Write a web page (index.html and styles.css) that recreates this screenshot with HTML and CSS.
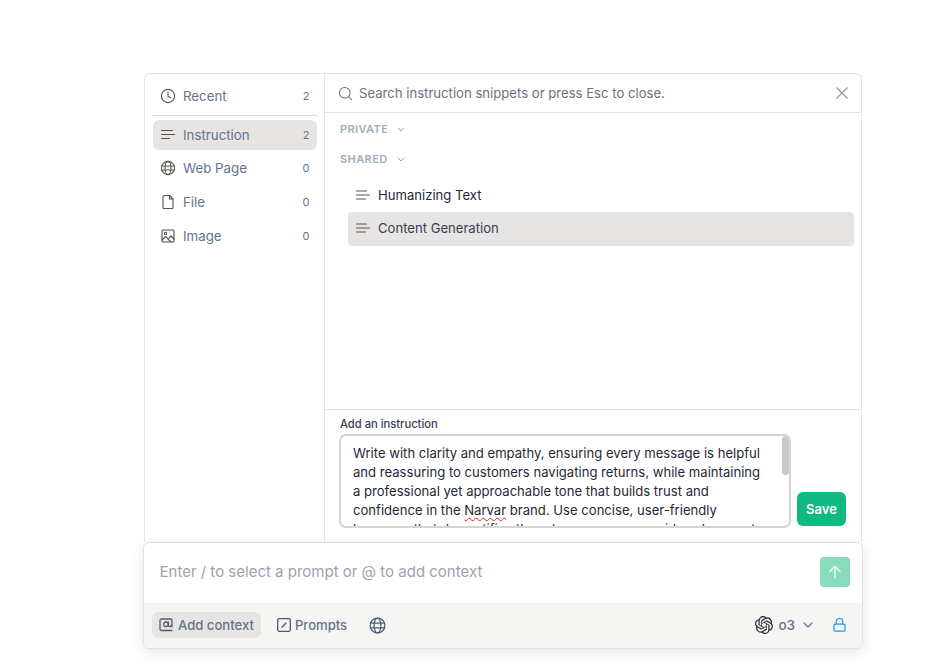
FILE: index.html
```html
<!DOCTYPE html>
<html lang="en">
<head>
<meta charset="utf-8">
<title>Instruction snippets</title>
<link rel="stylesheet" href="styles.css">
</head>
<body>
<main class="stage">
  <section class="panel">
    <aside class="sidebar">
      <div class="nav-item nav-recent">
        <svg class="nav-icon" viewBox="0 0 16 16"><circle cx="8" cy="8" r="6.6"/><path d="M8 4v4.2l2.7 1.5"/></svg>
        <span class="nav-label">Recent</span><span class="count">2</span>
      </div>
      <div class="nav-divider"></div>
      <div class="nav-item nav-active">
        <svg class="nav-icon" viewBox="0 0 16 16"><path d="M1.5 3.5h11M1.5 7.5h13M1.5 11.5h8"/></svg>
        <span class="nav-label">Instruction</span><span class="count">2</span>
      </div>
      <div class="nav-item nav-web">
        <svg class="nav-icon" viewBox="0 0 16 16"><circle cx="8" cy="8" r="6.6"/><ellipse cx="8" cy="8" rx="3" ry="6.6"/><path d="M1.6 6h12.8M1.6 10h12.8"/></svg>
        <span class="nav-label">Web Page</span><span class="count">0</span>
      </div>
      <div class="nav-item nav-file">
        <svg class="nav-icon" viewBox="0 0 16 16"><path d="M3 2.5a1 1 0 0 1 1-1h5.5L13 5v8.5a1 1 0 0 1-1 1H4a1 1 0 0 1-1-1zM9.5 1.500V5H13"/></svg>
        <span class="nav-label">File</span><span class="count">0</span>
      </div>
      <div class="nav-item nav-image">
        <svg class="nav-icon" viewBox="0 0 16 16"><rect x="2" y="2" width="12" height="12" rx="1"/><circle cx="5.500" cy="5.500" r="1.200"/><path d="M2 12l3.500-3.500 5.500 5.500M9 10l2-2 3 3"/></svg>
        <span class="nav-label">Image</span><span class="count">0</span>
      </div>
    </aside>
    <div class="content">
      <header class="search">
        <svg class="search-icon" viewBox="0 0 16 16"><circle cx="7.200" cy="7.200" r="5.700"/><path d="M11.300 11.300l3.200 3.200"/></svg>
        <span class="search-text">Search instruction snippets or press Esc to close.</span>
        <svg class="close-icon" viewBox="0 0 12 12"><path d="M.8.8l10.400 10.400M11.200.8L.8 11.200"/></svg>
      </header>
      <div class="list">
        <div class="group group-private">PRIVATE <svg class="group-chevron" viewBox="0 0 8 5"><path d="M1 1l3 3 3-3"/></svg></div>
        <div class="group group-shared">SHARED <svg class="group-chevron" viewBox="0 0 8 5"><path d="M1 1l3 3 3-3"/></svg></div>
        <div class="snippet">
          <svg class="snippet-icon" viewBox="0 0 14 10"><path d="M.5 1h10M.5 5h13M.5 9h9"/></svg>
          <span>Humanizing Text</span>
        </div>
        <div class="snippet snippet-active">
          <svg class="snippet-icon" viewBox="0 0 14 10"><path d="M.5 1h10M.5 5h13M.5 9h9"/></svg>
          <span>Content Generation</span>
        </div>
      </div>
      <div class="editor">
        <div class="editor-label">Add an instruction</div>
        <div class="editor-row">
          <div class="textbox">
            <div class="textbox-text">Write with clarity and empathy, ensuring every message is helpful and reassuring to customers navigating returns, while maintaining a professional yet approachable tone that builds trust and confidence in the <span class="misspelled">Narvar</span> brand. Use concise, user-friendly language that demystifies the return process, provides clear next</div>
            <div class="scroll-thumb"></div>
          </div>
          <button class="save" type="button">Save</button>
        </div>
      </div>
    </div>
  </section>
  <section class="composer">
    <div class="composer-input">
      <span class="placeholder">Enter / to select a prompt or @ to add context</span>
      <button class="send" type="button" aria-label="Send">
        <svg viewBox="0 0 14 14"><path d="M7 13V1.500M1.800 6.500L7 1.300l5.200 5.200"/></svg>
      </button>
    </div>
    <div class="toolbar">
      <div class="tool tool-context">
        <svg class="tool-icon" viewBox="0 0 14 14"><path d="M13 12.500H2.500A1.500 1.500 0 0 1 1 11V2.500A1.500 1.500 0 0 1 2.500 1h9A1.500 1.500 0 0 1 13 2.500V9"/><circle cx="7" cy="6.300" r="2.300"/><path d="M9.300 4v3.200a1.400 1.400 0 0 0 2.800 0"/></svg>
        <span>Add context</span>
      </div>
      <div class="tool tool-prompts">
        <svg class="tool-icon" viewBox="0 0 14 14"><rect x=".7" y=".7" width="12.600" height="12.600" rx="1.500"/><path d="M5 9.200L9 5"/></svg>
        <span>Prompts</span>
      </div>
      <svg class="tool-globe" viewBox="0 0 16 16"><circle cx="8" cy="8" r="7"/><ellipse cx="8" cy="8" rx="3.200" ry="7"/><path d="M1.300 5.800h13.400M1.300 10.200h13.400"/></svg>
      <div class="model">
        <svg class="model-logo" viewBox="0 0 24 24"><path d="M22.282 9.821a5.985 5.985 0 0 0-.516-4.910 6.046 6.046 0 0 0-6.510-2.900A6.065 6.065 0 0 0 4.981 4.180a5.985 5.985 0 0 0-3.998 2.900 6.046 6.046 0 0 0 .743 7.097 5.980 5.980 0 0 0 .510 4.911 6.051 6.051 0 0 0 6.515 2.900A5.985 5.985 0 0 0 13.260 24a6.056 6.056 0 0 0 5.772-4.206 5.990 5.990 0 0 0 3.997-2.900 6.056 6.056 0 0 0-.747-7.073zM13.260 22.430a4.476 4.476 0 0 1-2.876-1.040l.141-.081 4.779-2.758a.795.795 0 0 0 .392-.681v-6.737l2.020 1.168a.071.071 0 0 1 .038.052v5.583a4.504 4.504 0 0 1-4.494 4.494zM3.600 18.304a4.470 4.470 0 0 1-.535-3.014l.142.085 4.783 2.759a.771.771 0 0 0 .78 0l5.843-3.369v2.332a.080.080 0 0 1-.033.062L9.740 19.950a4.500 4.500 0 0 1-6.140-1.646zM2.340 7.896a4.485 4.485 0 0 1 2.366-1.973V11.600a.766.766 0 0 0 .388.676l5.815 3.355-2.020 1.168a.076.076 0 0 1-.071 0l-4.830-2.786A4.504 4.504 0 0 1 2.340 7.872zm16.597 3.855l-5.833-3.387L15.119 7.200a.076.076 0 0 1 .071 0l4.830 2.791a4.494 4.494 0 0 1-.676 8.105v-5.678a.790.790 0 0 0-.407-.667zm2.010-3.023l-.141-.085-4.774-2.782a.776.776 0 0 0-.785 0L9.409 9.230V6.897a.066.066 0 0 1 .028-.061l4.830-2.787a4.500 4.500 0 0 1 6.680 4.660zm-12.640 4.135l-2.020-1.164a.080.080 0 0 1-.038-.057V6.075a4.500 4.500 0 0 1 7.375-3.453l-.142.080L8.704 5.460a.795.795 0 0 0-.393.681zm1.097-2.365l2.602-1.500 2.607 1.500v2.999l-2.597 1.500-2.607-1.500z"/></svg>
        <span class="model-name">o3</span>
        <svg class="model-chevron" viewBox="0 0 10 6"><path d="M1 1l4 4 4-4"/></svg>
      </div>
      <svg class="lock" viewBox="0 0 14 15"><rect x="1" y="6.500" width="12" height="7.500" rx="1.500"/><path d="M3.500 6.500V4a3.500 3.500 0 0 1 7 0v2.500"/></svg>
    </div>
  </section>
</main>
</body>
</html>
```

FILE: styles.css
```css
* { box-sizing: border-box; }

html, body {
  margin: 0;
  height: 100%;
  background: #fff;
  overflow: hidden;
}

body {
  font-family: Inter, "Liberation Sans", sans-serif;
  color: #1f2937;
}

.stage {
  width: 720px;
  margin-left: 143px;
  padding-top: 73px;
}

svg {
  display: block;
  flex: none;
  fill: none;
  stroke-linecap: round;
  stroke-linejoin: round;
}

/* Upper panel */
.panel {
  display: flex;
  height: 469px;
  margin: 0 1px;
  background: #fff;
  border: 1px solid #e5e5e5;
  border-bottom: 0;
  border-radius: 6px 6px 0 0;
}

.sidebar {
  flex: none;
  width: 180px;
  padding: 7px 7px 0 8px;
  border-right: 1px solid #e5e5e5;
}

.nav-item {
  display: flex;
  align-items: center;
  height: 30px;
  padding: 0 7.5px 0 7px;
  border-radius: 6px;
  font-size: 13.3px;
  color: #64748b;
}

.nav-divider {
  height: 1px;
  margin: 4px 0 4px;
  background: #dcdcdc;
}

.nav-active { background: #e7e5e4; }
.nav-web { margin-top: 3px; }
.nav-file { margin-top: 4px; }
.nav-image { margin-top: 4px; }

.nav-icon {
  width: 16px;
  height: 16px;
  margin-right: 7px;
  stroke: #57534e;
  stroke-width: 1.100;
}

.nav-label { flex: 1; }

.count {
  font-size: 11px;
  color: #64748b;
}

.content {
  flex: 1;
  min-width: 0;
  display: flex;
  flex-direction: column;
}

.search {
  flex: none;
  display: flex;
  align-items: center;
  height: 39px;
  padding: 0 13px 0 13px;
  border-bottom: 1px solid #e5e5e5;
}

.search-icon {
  width: 15px;
  height: 15px;
  margin-right: 6px;
  stroke: #71717a;
  stroke-width: 1.100;
}

.search-text {
  flex: 1;
  font-size: 13.13px;
  color: #6b7280;
}

.close-icon {
  width: 12px;
  height: 12px;
  stroke: #8c8c8c;
  stroke-width: 1.200;
}

.list {
  flex: 1;
  min-height: 0;
  padding: 0 7px 0 23px;
}

.group {
  display: flex;
  align-items: center;
  gap: 9px;
  height: 16px;
  margin-left: -8px;
  font-size: 11px;
  font-weight: 600;
  letter-spacing: 0.4px;
  color: #a0aec0;
}

.group-private { margin-top: 8px; }
.group-shared { margin-top: 14px; margin-bottom: 11px; }

.group-chevron {
  width: 8px;
  height: 5px;
  stroke: #94a3b8;
  stroke-width: 1;
}

.snippet {
  display: flex;
  align-items: center;
  height: 34px;
  padding: 0 8px;
  gap: 8px;
  border-radius: 4px;
  font-size: 13.1px;
  color: #1f2937;
}

.snippet-active {
  padding-bottom: 2px;
  background: #e7e5e4;
  color: #374151;
}

.snippet-icon {
  width: 14px;
  height: 10px;
  stroke: #57534e;
  stroke-width: 1.100;
}

.editor {
  flex: none;
  height: 133px;
  padding: 6px 8px 0 14px;
  border-top: 1px solid #e5e5e5;
}

.editor-label {
  height: 16px;
  margin-left: 1px;
  font-size: 11.2px;
  line-height: 16px;
  font-weight: 500;
  color: #374151;
}

.editor-row {
  display: flex;
  align-items: flex-end;
  gap: 6px;
  margin-top: 2px;
}

.textbox {
  position: relative;
  flex: none;
  width: 452px;
  height: 94px;
  overflow: hidden;
  border: 2px solid #d6d3d1;
  border-radius: 7px;
  background: #fff;
  padding: 8px 22px 0 12px;
}

.textbox-text {
  font-size: 13.1px;
  line-height: 19px;
  color: #1f2937;
}

.misspelled {
  text-decoration: underline wavy #e02020 1px;
  text-underline-offset: 2px;
}

.scroll-thumb {
  position: absolute;
  top: 0;
  right: 0;
  width: 7px;
  height: 39px;
  border-radius: 4px;
  background: #c8c8c8;
}

.save {
  flex: none;
  width: 49px;
  height: 34px;
  margin-bottom: 2px;
  border: 0;
  border-radius: 6px;
  background: #10b981;
  color: #fff;
  font: 600 13px Inter, "Liberation Sans", sans-serif;
  padding: 0;
}

/* Composer */
.composer {
  height: 107px;
  border: 1px solid #e2e2e2;
  border-radius: 6px;
  background: #fff;
  overflow: hidden;
  box-shadow: 0 4px 14px rgba(0, 0, 0, 0.10);
  display: flex;
  flex-direction: column;
}

.composer-input {
  flex: none;
  display: flex;
  align-items: flex-start;
  justify-content: space-between;
  height: 60px;
  padding: 14px 12px 0 15.5px;
}

.placeholder {
  margin-top: 6px;
  font-size: 15px;
  line-height: 18px;
  color: #9ca3af;
}

.send {
  width: 30px;
  height: 30px;
  padding: 0;
  display: flex;
  align-items: center;
  justify-content: center;
  border: 0;
  border-radius: 4px;
  background: #88dcbc;
}

.send svg {
  width: 14px;
  height: 14px;
  stroke: #f0fdf8;
  stroke-width: 1.400;
}

.toolbar {
  flex: 1;
  display: flex;
  align-items: center;
  padding: 0 16px 2px 8px;
  background: #f5f5f4;
}

.tool {
  display: flex;
  align-items: center;
  height: 26px;
  font-size: 13.1px;
  font-weight: 500;
  color: #64748b;
}

.tool-context {
  padding: 0 7px;
  gap: 5px;
  border-radius: 6px;
  background: #e7e5e4;
}

.tool-prompts {
  margin-left: 16px;
  gap: 4px;
}

.tool-icon {
  width: 14px;
  height: 14px;
  stroke: #4b5b75;
  stroke-width: 1.300;
}

.tool-globe {
  width: 17px;
  height: 17px;
  margin-left: 22px;
  margin-top: 1px;
  stroke: #4b5b75;
  stroke-width: 1.100;
}

.model {
  display: flex;
  align-items: center;
  margin-left: auto;
  font-size: 13.5px;
  font-weight: 500;
  color: #64748b;
}

.model-logo {
  width: 18px;
  height: 18px;
  fill: #1f2937;
  margin-right: 5px;
}

.model-chevron {
  width: 10px;
  height: 6px;
  margin-left: 8px;
  stroke: #64748b;
  stroke-width: 1.200;
}

.lock {
  width: 13px;
  height: 14px;
  margin-left: 20px;
  stroke: #2196f3;
  stroke-width: 1.300;
}
```
